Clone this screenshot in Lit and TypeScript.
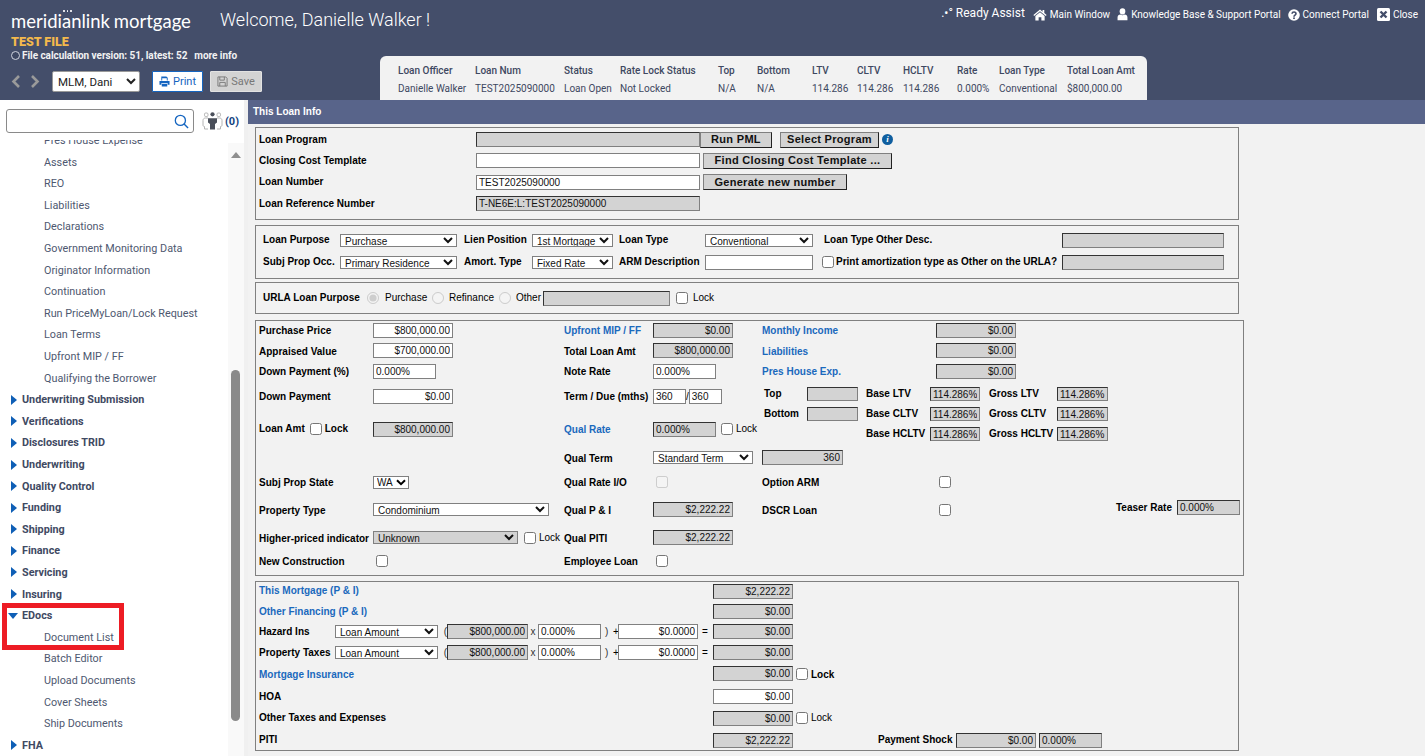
import { LitElement, html, css, svg } from "lit";
import { customElement } from "lit/decorators.js";

const groupsTop = ["Underwriting Submission","Verifications","Disclosures TRID","Underwriting","Quality Control","Funding","Shipping","Finance","Servicing","Insuring"];
const borrowerItems = ["Pres House Expense","Assets","REO","Liabilities","Declarations","Government Monitoring Data","Originator Information","Continuation","Run PriceMyLoan/Lock Request","Loan Terms","Upfront MIP / FF","Qualifying the Borrower"];
const edocItems = ["Document List","Batch Editor","Upload Documents","Cover Sheets","Ship Documents"];
const summary = [
  ["Loan Officer","Danielle Walker"],["Loan Num","TEST2025090000"],["Status","Loan Open"],["Rate Lock Status","Not Locked"],
  ["Top","N/A"],["Bottom","N/A"],["LTV","114.286"],["CLTV","114.286"],["HCLTV","114.286"],["Rate","0.000%"],["Loan Type","Conventional"],["Total Loan Amt","$800,000.00"],
];

const inp = (v: string, cls = "w80 r") => html`<input class="in ${cls}" .value=${v} value=${v} readonly />`;
const ro = (v: string, cls = "w80 r") => html`<input class="in ro ${cls}" .value=${v} value=${v} readonly />`;
const sel = (v: string, cls: string) => html`<select class="sl ${cls}"><option>${v}</option></select>`;
const cb = (dis = false) => html`<input class="cb" type="checkbox" ?disabled=${dis} />`;

const homeIcon = svg`<svg class="ic" viewBox="0 0 16 14" width="14" height="12"><path fill="#fff" d="M8 0.6 0.3 7l.9 1.1L8 2.5l6.8 5.6.9-1.1-2.7-2.2V1.2h-2v2.1zM8 3.7 2.6 8.2V13.4h3.8V9.6h3.2v3.8h3.8V8.2z"/></svg>`;
const userIcon = svg`<svg class="ic" viewBox="0 0 12 14" width="11" height="13"><ellipse fill="#fff" cx="6" cy="3.6" rx="3.1" ry="3.4"/><path fill="#fff" d="M.6 13.4V10.4C.6 8.4 2 7 3.6 7c.7.5 1.5.8 2.4.8S7.700 7.500 8.400 7C10 7 11.400 8.400 11.400 10.400v3z"/></svg>`;
const helpIcon = svg`<svg class="ic" viewBox="0 0 14 14" width="12" height="12"><circle cx="7" cy="7" r="6.800" fill="#fff"/><path fill="none" stroke="#444e6a" stroke-width="1.900" d="M4.700 5.500C4.800 4.200 5.800 3.500 7 3.500c1.300 0 2.300.8 2.300 2 0 1.700-2.300 1.600-2.300 3.400"/><rect x="6" y="9.800" width="2" height="1.900" fill="#444e6a"/></svg>`;
const closeIcon = svg`<svg class="ic" viewBox="0 0 13 13" width="13" height="13"><rect width="13" height="13" rx="1.500" fill="#fff"/><path d="M3.500 3.500 9.500 9.500M9.500 3.500 3.500 9.500" stroke="#444e6a" stroke-width="2.400"/></svg>`;
const printIcon = svg`<svg viewBox="0 0 12 12" width="11" height="11"><path fill="#1565c0" d="M2.500 0.500h5.500l1.500 1.500v3h-1V2.500H3.500V5h-1zM0.500 5.500h11v4h-2V8h-7v1.500h-2zM3 8.800h6v2.700H3z"/></svg>`;
const saveIcon = svg`<svg viewBox="0 0 12 12" width="11" height="11"><path fill="none" stroke="#777" stroke-width="1" d="M1 1h8.500L11 2.500V11H1zM3 1v3.500h5V1M3 11V7h6v4"/></svg>`;
const searchIcon = svg`<svg viewBox="0 0 16 16" width="15" height="15"><circle cx="6.800" cy="6.800" r="5.400" fill="none" stroke="#1565c0" stroke-width="1.400"/><path d="M10.700 10.700 15 15" stroke="#1565c0" stroke-width="1.500"/></svg>`;
const teamIcon = svg`<svg viewBox="0 0 21 18" width="21" height="18"><g fill="none" stroke="#b4b4b4" stroke-width="1"><rect x="2.500" y="1" width="3.500" height="3.500" rx="1.200"/><rect x="15" y="1" width="3.500" height="3.500" rx="1.200"/><path d="M6 6H3.500C2 6 1 7 1 8.500V13c0 1 .6 1.500 1.500 1.500V17H6M15 6h2.500C19 6 20 7 20 8.500V13c0 1-.6 1.500-1.500 1.500V17H15"/></g><circle cx="10.500" cy="2.300" r="2.100" fill="#4a4f5a"/><path fill="#4a4f5a" d="M6 6.200h9v4.200l-2 1.600v5.500H8V12L6 10.400z"/></svg>`;
const arrowRight = svg`<svg class="ar" viewBox="0 0 6 10" width="6" height="10"><path d="M0 0 6 5 0 10z" fill="#0f5fb6"/></svg>`;
const arrowDown = svg`<svg class="ad" viewBox="0 0 10 6" width="10" height="6"><path d="M0 0H10L5 6z" fill="#0f5fb6"/></svg>`;
const prevIcon = svg`<svg viewBox="0 0 10 13" width="10" height="13"><path d="M8 1 2.500 6.500 8 12" fill="none" stroke="#9a9a9a" stroke-width="2.600"/></svg>`;
const nextIcon = svg`<svg viewBox="0 0 10 13" width="10" height="13"><path d="M2 1 7.500 6.500 2 12" fill="none" stroke="#9a9a9a" stroke-width="2.600"/></svg>`;

@customElement("app-root")
export class AppRoot extends LitElement {
  static styles = css`
    :host { display:block; width:100%; height:756px; overflow:hidden; background:#fff; font-family:"Liberation Sans",Arial,sans-serif; }
    .page { display:grid; grid-template-rows:100px 656px; height:756px; overflow:hidden; }
    header { background:#444e6a; display:grid; grid-template-columns:380px 767px 1fr; grid-template-rows:56px 44px; color:#fff; font-family:Roboto,sans-serif; }
    .hleft { grid-column:1; grid-row:1 / 3; position:relative; padding-left:11px; }
    .brand { display:flex; align-items:flex-start; height:36px; }
    .logo { position:relative; font-family:Lato,sans-serif; font-size:18.500px; line-height:42px; height:36px; width:209px; color:#fff; white-space:nowrap; flex:none; }
    .logo .mg { margin-left:-1px; }
    .dots { position:absolute; left:52px; top:10px; display:flex; gap:2px; }
    .dots i { width:1.500px; height:1.500px; background:#fff; border-radius:50%; }
    .welcome { font-weight:300; font-size:18px; line-height:40px; white-space:nowrap; }
    .tf { font-weight:900; font-size:12.500px; line-height:13px; color:#f3b94c; margin-top:-1px; }
    .ver { font-weight:700; font-size:10px; line-height:13px; display:flex; align-items:center; margin-top:1px; height:13px; color:#f2f2f2; white-space:nowrap; letter-spacing:-.05px; }
    .ver .c { width:7px; height:7px; border:1px solid #cfd3de; border-radius:50%; box-sizing:content-box; margin-right:2px; background:#3d4763; }
    .ver .m { margin-left:7px; }
    .tools { display:flex; align-items:center; height:21px; margin-top:9px; }
    .tools .nv { display:flex; gap:9px; width:41px; align-items:center; }
    .mlm { width:88px; height:21px; font:11.500px Roboto,sans-serif; background:#fff; border:1px solid #999; border-radius:2px; padding:0 0 0 1px; color:#222; }
    .btn { box-sizing:border-box; height:21px; display:flex; align-items:center; justify-content:center; gap:3px; font-size:11px; border-radius:1px; }
    .print { margin-left:12px; width:51px; background:#fff; border:1px solid #1565c0; color:#1565c0; }
    .save { margin-left:7px; width:52px; background:#d3d3d3; border:1px solid #e2e2e2; color:#777; }
    .links { grid-column:2 / 4; grid-row:1; display:flex; justify-content:flex-end; align-items:flex-start; padding:7px 7px 0 0; font-size:10px; line-height:15px; white-space:nowrap; }
    .links .ln { display:flex; align-items:center; gap:3px; margin-left:7px; }
    .links .ln:nth-of-type(2) { margin-left:8px; }
    .links .ln:last-child { margin-left:8px; }
    .ra { font-size:12px; display:flex; margin-top:-1px; }
    .ic { flex:none; }
    .tab { grid-column:2; grid-row:2; background:#f2f2f2; border-radius:6px 6px 0 0; display:grid; grid-template-columns:77px 89px 56px 98px 39px 55px 45px 46px 54px 42px 68px auto; grid-template-rows:18px 18px; padding:5px 0 0 18px; align-items:center; color:#3e4861; font-size:10px; white-space:nowrap; }
    .tab b { font-weight:500; }
    .body { display:flex; height:656px; overflow:hidden; }
    aside { width:244px; flex:none; background:#fff; position:relative; overflow:hidden; }
    .strip { width:4px; flex:none; background:#f0f0f0; }
    .sr { display:flex; align-items:flex-start; height:40px; padding:9px 0 0 6px; box-sizing:border-box; }
    .sbox { width:188px; height:24px; box-sizing:border-box; border:1px solid #8a8a8a; border-radius:3px; display:flex; justify-content:flex-end; align-items:center; padding:1px 4px 0 0; background:#fff; }
    .team { margin-left:8px; display:flex; align-items:center; height:24px; }
    .cnt { font:700 11px Roboto,sans-serif; color:#14437f; margin-left:2px; }
    .nav { height:616px; overflow:hidden; font-family:Roboto,sans-serif; font-size:10.800px; line-height:21.600px; }
    .nav .in0 { margin-top:-9.900px; }
    .it { padding-left:44px; color:#4e5870; white-space:nowrap; }
    .gr { padding-left:22px; color:#3f4a63; font-weight:700; position:relative; white-space:nowrap; }
    .ar { position:absolute; left:11px; top:5.500px; }
    .ad { position:absolute; left:8px; top:8px; }
    .track { position:absolute; left:228px; top:43px; bottom:0; width:16px; background:#f9f9f9; }
    .up { position:absolute; left:3px; top:9px; width:0; height:0; border-left:5px solid transparent; border-right:5px solid transparent; border-bottom:6px solid #8f8f8f; }
    .thumb { position:absolute; left:3px; top:227px; width:9px; height:351px; background:#8a8a8a; border-radius:5px; }
    .redbox { position:absolute; left:2px; top:503px; width:122px; height:47px; box-sizing:border-box; border:5px solid #ed1c24; }

    main { flex:1; background:#f2f2f2; min-width:0; color:#000; font-size:10px; }
    .tbar { height:24px; background:#58648a; color:#fff; font:700 10px/24px "Liberation Sans",Arial,sans-serif; padding-left:5px; }
    .wrap { padding:3px 0 0 7px; }
    .box { box-sizing:border-box; width:984px; border:1px solid #808080; background:#f2f2f2; }
    .lb { font-weight:700; white-space:nowrap; line-height:12px; }
    .bl { color:#1a69bd; }
    .cell { display:flex; align-items:center; min-width:0; white-space:nowrap; }

    .in { box-sizing:border-box; height:15px; font:10px "Liberation Sans",Arial,sans-serif; color:#111; padding:0 2px; margin:0; border:1px solid #808080; background:#fff; border-radius:0; outline:none; display:block; flex:none; }
    .ro { background:#d3d3d3; border-top-color:#333; border-left-color:#333; }
    .r { text-align:right; }
    .sl { box-sizing:border-box; height:13px; font:10px "Liberation Sans",Arial,sans-serif; color:#111; padding:0; margin:0; border:1px solid #808080; background:#fff; border-radius:0; flex:none; }
    .sl.gy { background:#d3d3d3; }
    .sl.wa { appearance:none; padding-left:3px; background:#fff url("data:image/svg+xml,%3Csvg xmlns='http://www.w3.org/2000/svg' width='10' height='7'%3E%3Cpath d='M1 1.200 5 5.200 9 1.200' fill='none' stroke='%23000' stroke-width='2'/%3E%3C/svg%3E") no-repeat 22px 2px; }
    .cb { width:12px; height:12px; margin:0; flex:none; }
    .rd { width:12px; height:12px; margin:0; flex:none; }

    .w80 { width:80px; } .w81 { width:81px; } .w63 { width:63px; } .w33 { width:33px; } .w32 { width:32px; } .w51 { width:51px; }
    .w50 { width:50px; } .w224 { width:224px; } .w127 { width:127px; } .w162 { width:162px; } .w108 { width:108px; }
    .w117 { width:117px; } .w36 { width:36px; } .w176 { width:176px; } .w145 { width:145px; } .w100 { width:100px; } .w103 { width:103px; }

    .b1 { height:93px; display:grid; grid-template-columns:217px 224px 1fr; grid-template-rows:21px 21px 22px 21px; padding:1px 0 0 3px; margin-bottom:5px; }
    .pb { box-sizing:border-box; height:16px; background:#d3d3d3; border:1px solid; border-color:#808080 #222 #222 #808080; font:700 11px/14px "Liberation Sans",Arial,sans-serif; letter-spacing:.3px; color:#111; padding:0 0 1px; display:flex; align-items:center; justify-content:center; flex:none; }
    .p72 { width:72px; } .p99 { width:99px; margin-left:8px; } .p189 { width:189px; margin-left:3px; } .p144 { width:144px; margin-left:3px; }
    .info { width:11px; height:11px; margin-left:3px; border-radius:50%; background:#0f5e9f; color:#fff; font:italic 700 9px/11px "Liberation Serif",serif; text-align:center; }

    .b2 { height:54px; display:grid; grid-template-columns:77px 124px 68px 87px 86px 119px 238px 162px; grid-template-rows:22px 22px; padding:3px 0 0 7px; margin-bottom:3px; }
    .nudge { margin-left:-2px; }
    .gapc { margin-left:2px; }
    .b3 { height:32px; display:flex; align-items:center; padding-left:7px; margin-bottom:6px; }
    .m367 { width:104px; }
    .lgap { margin-left:6px; }
    .lg5 { margin-left:5px; }
    .tw41 { width:41px; } .tw44 { width:44px; } .tw27 { width:27px; }

    .b4 { width:989px; height:256px; display:grid; grid-template-columns:114px 191px 89px 109px 174px 1fr; grid-template-rows:19px 21px 20px 30px 36px 21px 28px 27px 29px 18px; padding:0 0 0 3px; margin-bottom:5px; }
    .b4 > .lb { padding-top:2px; }
    .b4 > .lb:nth-child(-n+6) { padding-top:0; }
    .nest { grid-column:5 / 7; grid-row:4 / 6; display:grid; grid-template-columns:43px 59px 64px 59px 68px 51px; grid-auto-rows:20px; align-content:start; padding:3px 0 0 2px; align-items:center; }
    .nest .in { height:14px; }
    .tlb { margin-left:165px; width:61px; }
    .tup { margin-bottom:4px; }
    .sh3 { margin-left:3px; }
    .lm { margin-left:3px; }
    .lm5 { margin-left:5px; }

    .b5 { height:170px; padding:0 0 0 3px; }
    .rw { display:flex; align-items:center; }
    .h18 { height:18px; } .h19 { height:19px; } .h20 { height:20px; } .h21 { height:21px; } .h22 { height:22px; } .h24 { height:24px; }
    .d1 { padding-top:2px; }
    .l454 { width:454px; }
    .l76 { width:76px; flex:none; }
    .op { width:9px; text-align:right; color:#333; flex:none; }
    .x { width:10px; text-align:center; flex:none; color:#333; }
    .cp { width:12px; flex:none; color:#333; padding-left:4px; box-sizing:border-box; }
    .pl { width:5px; flex:none; }
    .eq { width:15px; padding-left:4px; box-sizing:border-box; flex:none; }
    .ps { margin-left:85px; width:78px; }
    .s3 { margin-left:3px; }
    .t { line-height:12px; }
  `;

  render() {
    return html`<div class="page">
      ${this.renderHeader()}
      <div class="body">
        ${this.renderSide()}
        <div class="strip"></div>
        <main>
          <div class="tbar">This Loan Info</div>
          <div class="wrap">
            ${this.box1()}${this.box2()}${this.box3()}${this.box4()}${this.box5()}
          </div>
        </main>
      </div>
    </div>`;
  }

  renderHeader() {
    return html`<header>
      <div class="hleft">
        <div class="brand">
          <div class="logo">meridianlink <span class="mg">mortgage</span><span class="dots"><i></i><i></i><i></i></span></div>
          <div class="welcome">Welcome, Danielle Walker !</div>
        </div>
        <div class="tf">TEST FILE</div>
        <div class="ver"><span class="c"></span>File calculation version: 51, latest: 52 <span class="m">more info</span></div>
        <div class="tools">
          <div class="nv">${prevIcon}${nextIcon}</div>
          <select class="mlm"><option>MLM, Dani</option></select>
          <div class="btn print">${printIcon}<span>Print</span></div>
          <div class="btn save">${saveIcon}<span>Save</span></div>
        </div>
      </div>
      <div class="links">
        <span class="ra">.•° Ready Assist</span>
        <span class="ln">${homeIcon}Main Window</span>
        <span class="ln">${userIcon}Knowledge Base &amp; Support Portal</span>
        <span class="ln">${helpIcon}Connect Portal</span>
        <span class="ln">${closeIcon}Close</span>
      </div>
      <div class="tab">
        ${summary.map(s => html`<b>${s[0]}</b>`)}
        ${summary.map(s => html`<span>${s[1]}</span>`)}
      </div>
    </header>`;
  }

  renderSide() {
    return html`<aside>
      <div class="sr">
        <div class="sbox">${searchIcon}</div>
        <div class="team">${teamIcon}<span class="cnt">(0)</span></div>
      </div>
      <div class="nav">
        <div class="in0">
          ${borrowerItems.map(i => html`<div class="it">${i}</div>`)}
          ${groupsTop.map(g => html`<div class="gr">${arrowRight}${g}</div>`)}
          <div class="gr">${arrowDown}EDocs</div>
          ${edocItems.map(i => html`<div class="it">${i}</div>`)}
          <div class="gr">${arrowRight}FHA</div>
        </div>
      </div>
      <div class="track"><div class="up"></div><div class="thumb"></div></div>
      <div class="redbox"></div>
    </aside>`;
  }

  box1() {
    return html`<div class="box b1">
      <div class="cell lb">Loan Program</div>
      <div class="cell">${ro("", "w224")}</div>
      <div class="cell"><div class="pb p72">Run PML</div><div class="pb p99">Select Program</div><div class="info">i</div></div>
      <div class="cell lb">Closing Cost Template</div>
      <div class="cell">${inp("", "w224")}</div>
      <div class="cell"><div class="pb p189">Find Closing Cost Template ...</div></div>
      <div class="cell lb">Loan Number</div>
      <div class="cell">${inp("TEST2025090000", "w224")}</div>
      <div class="cell"><div class="pb p144">Generate new number</div></div>
      <div class="cell lb">Loan Reference Number</div>
      <div class="cell">${ro("T-NE6E:L:TEST2025090000", "w224")}</div>
      <div></div>
    </div>`;
  }

  box2() {
    return html`<div class="box b2">
      <div class="cell lb">Loan Purpose</div>
      <div class="cell">${sel("Purchase", "w117")}</div>
      <div class="cell lb">Lien Position</div>
      <div class="cell">${sel("1st Mortgage", "w81")}</div>
      <div class="cell lb">Loan Type</div>
      <div class="cell">${sel("Conventional", "w108")}</div>
      <div class="cell lb">Loan Type Other Desc.</div>
      <div class="cell">${ro("", "w162")}</div>
      <div class="cell lb">Subj Prop Occ.</div>
      <div class="cell">${sel("Primary Residence", "w117")}</div>
      <div class="cell lb">Amort. Type</div>
      <div class="cell">${sel("Fixed Rate", "w81")}</div>
      <div class="cell lb">ARM Description</div>
      <div class="cell">${inp("", "w108")}</div>
      <div class="cell nudge">${cb()}<span class="lb gapc">Print amortization type as Other on the URLA?</span></div>
      <div class="cell">${ro("", "w162")}</div>
    </div>`;
  }

  box3() {
    return html`<div class="box b3">
      <span class="lb m367">URLA Loan Purpose</span>
      <input class="rd" type="radio" name="u" checked disabled />
      <span class="t lgap tw41">Purchase</span>
      <input class="rd lgap" type="radio" name="u" disabled />
      <span class="t lg5 tw44">Refinance</span>
      <input class="rd lgap" type="radio" name="u" disabled />
      <span class="t lg5 tw27">Other</span>
      ${ro("", "w127")}
      <span class="lgap cell">${cb()}</span>
      <span class="t lg5">Lock</span>
    </div>`;
  }

  box4() {
    return html`<div class="box b4">
      <div class="cell lb">Purchase Price</div><div class="cell">${inp("$800,000.00")}</div>
      <div class="cell lb bl">Upfront MIP / FF</div><div class="cell">${ro("$0.00")}</div>
      <div class="cell lb bl">Monthly Income</div><div class="cell">${ro("$0.00")}</div>

      <div class="cell lb">Appraised Value</div><div class="cell">${inp("$700,000.00")}</div>
      <div class="cell lb">Total Loan Amt</div><div class="cell">${ro("$800,000.00")}</div>
      <div class="cell lb bl">Liabilities</div><div class="cell">${ro("$0.00")}</div>

      <div class="cell lb">Down Payment (%)</div><div class="cell">${inp("0.000%", "w63")}</div>
      <div class="cell lb">Note Rate</div><div class="cell">${inp("0.000%", "w63")}</div>
      <div class="cell lb bl">Pres House Exp.</div><div class="cell">${ro("$0.00")}</div>

      <div class="cell lb">Down Payment</div><div class="cell">${inp("$0.00")}</div>
      <div class="cell lb">Term / Due (mths)</div>
      <div class="cell">${inp("360", "w33")}<span>/</span>${inp("360", "w33")}</div>
      <div class="nest">
        <div class="lb">Top</div><div>${ro("", "w51")}</div><div class="lb">Base LTV</div><div>${ro("114.286%", "w50")}</div><div class="lb">Gross LTV</div><div>${ro("114.286%", "w51")}</div>
        <div class="lb">Bottom</div><div>${ro("", "w51")}</div><div class="lb">Base CLTV</div><div>${ro("114.286%", "w50")}</div><div class="lb">Gross CLTV</div><div>${ro("114.286%", "w51")}</div>
        <div></div><div></div><div class="lb">Base HCLTV</div><div>${ro("114.286%", "w50")}</div><div class="lb">Gross HCLTV</div><div>${ro("114.286%", "w51")}</div>
      </div>

      <div class="cell"><span class="lb">Loan Amt</span><span class="lm5 cell">${cb()}</span><span class="lb lm">Lock</span></div><div class="cell">${ro("$800,000.00")}</div>
      <div class="cell lb bl">Qual Rate</div><div class="cell">${ro("0.000%", "w63")}<span class="lg5 cell">${cb()}</span><span class="t lm">Lock</span></div>

      <div></div><div></div>
      <div class="cell lb">Qual Term</div><div class="cell">${sel("Standard Term", "w100")}</div>
      <div class="cell">${ro("360", "w81 r")}</div><div></div>

      <div class="cell lb">Subj Prop State</div><div class="cell">${sel("WA", "w36 wa")}</div>
      <div class="cell lb">Qual Rate I/O</div><div class="cell"><span class="sh3 cell">${cb(true)}</span></div>
      <div class="cell lb">Option ARM</div><div class="cell"><span class="sh3 cell">${cb()}</span></div>

      <div class="cell lb">Property Type</div><div class="cell">${sel("Condominium", "w176")}</div>
      <div class="cell lb">Qual P &amp; I</div><div class="cell">${ro("$2,222.22")}</div>
      <div class="cell lb">DSCR Loan</div>
      <div class="cell"><span class="sh3 cell">${cb()}</span><span class="lb tlb tup">Teaser Rate</span>${ro("0.000%", "w63 tup")}</div>

      <div class="cell lb">Higher-priced indicator</div>
      <div class="cell">${sel("Unknown", "w145 gy")}<span class="lgap cell">${cb()}</span><span class="t lm">Lock</span></div>
      <div class="cell lb">Qual PITI</div><div class="cell">${ro("$2,222.22")}</div>
      <div></div><div></div>

      <div class="cell lb">New Construction</div><div class="cell"><span class="sh3 cell">${cb()}</span></div>
      <div class="cell lb">Employee Loan</div><div class="cell"><span class="sh3 cell">${cb()}</span></div>
      <div></div><div></div>
    </div>`;
  }

  calcRow(label: string, h: string, labelCls = "") {
    return html`<div class="rw ${h}">
      <span class="lb l76 ${labelCls}">${label}</span>
      ${sel("Loan Amount", "w103")}
      <span class="op">(</span>
      ${ro("$800,000.00", "w81 r")}
      <span class="x">x</span>
      ${inp("0.000%", "w63")}
      <span class="cp">)</span>
      <span class="pl">+</span>
      ${inp("$0.0000", "w80 r")}
      <span class="eq">=</span>
      ${ro("$0.00")}
    </div>`;
  }

  box5() {
    return html`<div class="box b5">
      <div class="rw h18"><span class="lb bl l454">This Mortgage (P &amp; I)</span>${ro("$2,222.22")}</div>
      <div class="rw h22"><span class="lb bl l454 d1">Other Financing (P &amp; I)</span>${ro("$0.00")}</div>
      ${this.calcRow("Hazard Ins", "h19")}
      ${this.calcRow("Property Taxes", "h22", "d1")}
      <div class="rw h21"><span class="lb bl l454 d1">Mortgage Insurance</span>${ro("$0.00")}<span class="lm cell">${cb()}</span><span class="lb lm d1">Lock</span></div>
      <div class="rw h24"><span class="lb l454 d1">HOA</span>${inp("$0.00")}</div>
      <div class="rw h20"><span class="lb l454">Other Taxes and Expenses</span>${ro("$0.00")}<span class="lm cell">${cb()}</span><span class="t lm">Lock</span></div>
      <div class="rw h24"><span class="lb l454">PITI</span>${ro("$2,222.22")}<span class="lb ps">Payment Shock</span>${ro("$0.00")}${ro("0.000%", "w63 s3")}</div>
    </div>`;
  }
}
